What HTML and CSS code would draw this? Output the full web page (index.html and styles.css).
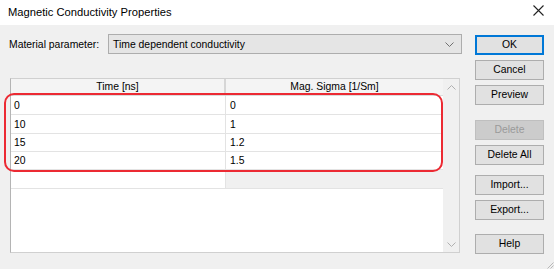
FILE: index.html
```html
<!DOCTYPE html>
<html>
<head>
    <meta charset="UTF-8">
    <title>Magnetic Conductivity Properties</title>
    <link rel="stylesheet" href="styles.css">
</head>
<body>
<div class="dialog">
    <div class="titlebar">
        <span class="title">Magnetic Conductivity Properties</span>
        <svg class="close" width="11" height="11" viewBox="0 0 11 11"><path d="M0.5 0.5L10.5 10.5M10.5 0.5L0.5 10.5" stroke="#222" stroke-width="1.1" fill="none"/></svg>
    </div>
    <div class="body">
        <div class="main">
            <div class="param-row">
                <span class="label">Material parameter:</span>
                <div class="combo">
                    <span>Time dependent conductivity</span>
                    <svg width="9" height="5" viewBox="0 0 9 5"><path d="M0.5 0.5L4.5 4.5L8.5 0.5" stroke="#707070" fill="none"/></svg>
                </div>
            </div>
            <div class="table">
                <div class="grid">
                    <div class="head">Time [ns]</div>
                    <div class="head">Mag. Sigma [1/Sm]</div>
                    <div class="cell">0</div><div class="cell">0</div>
                    <div class="cell">10</div><div class="cell">1</div>
                    <div class="cell">15</div><div class="cell">1.2</div>
                    <div class="cell">20</div><div class="cell">1.5</div>
                    <div class="cell"></div><div class="cell blank"></div>
                </div>
                <div class="scrollbar">
                    <svg width="9" height="5" viewBox="0 0 9 5"><path d="M0.5 4.5L4.5 0.5L8.5 4.5" stroke="#b0b0b0" fill="none"/></svg>
                    <svg width="9" height="5" viewBox="0 0 9 5"><path d="M0.5 0.5L4.5 4.5L8.5 0.5" stroke="#b0b0b0" fill="none"/></svg>
                </div>
            </div>
        </div>
        <div class="buttons">
            <div class="btn default">OK</div>
            <div class="btn">Cancel</div>
            <div class="btn">Preview</div>
            <div class="btn disabled gap">Delete</div>
            <div class="btn">Delete All</div>
            <div class="btn gap-sm">Import...</div>
            <div class="btn">Export...</div>
            <div class="btn gap-help">Help</div>
        </div>
    </div>
    <div class="outline"></div>
    <svg class="grip" width="8" height="8" viewBox="0 0 8 8"><path d="M7.5 1.5L1.5 7.5M7.5 4.5L4.5 7.5" stroke="#b8b8b8" fill="none"/></svg>
</div>
</body>
</html>
```

FILE: styles.css
```css
html,body{
    margin: 0;
    width: 100%;
    height: 100%;
}
body{
    background: #f0f0f0;
    font: 10.4px "Liberation Sans", Arial, sans-serif;
    color: #000;
}
.dialog{
    position: relative;
    width: 554px;
    height: 269px;
    overflow: hidden;
}
.titlebar{
    height: 25px;
    background: #fff;
    display: flex;
    align-items: center;
    justify-content: space-between;
    padding: 0 10px 0 8px;
    box-sizing: border-box;
}
.title{
    font-size: 11.2px;
    color: #000;
    margin-top: -2px;
}
.close{
    margin-top: -4px;
}
.body{
    display: flex;
}
.main{
    width: 475px;
    box-sizing: border-box;
    padding: 9px 0 0 9px;
}
.param-row{
    display: flex;
    align-items: center;
    height: 20px;
}
.label{
    width: 99px;
}
.combo{
    width: 354px;
    height: 20px;
    box-sizing: border-box;
    border: 1px solid #adadad;
    background: #e5e5e5;
    display: flex;
    align-items: center;
    justify-content: space-between;
    padding: 0 7px 0 4px;
}
.table{
    margin: 24px 0 0 1px;
    width: 450px;
    height: 175px;
    box-sizing: border-box;
    border: 1px solid #d0d0d0;
    border-left-color: #b4b4b4;
    background: #fff;
    display: flex;
}
.grid{
    width: 432px;
    display: grid;
    grid-template-columns: 215px 217px;
    grid-template-rows: 17px 19px 19px 18px 18px 19px;
    align-content: start;
}
.head{
    background: #f4f4f4;
    text-align: center;
    line-height: 16px;
    border-bottom: 1px solid #dcdcdc;
    box-sizing: border-box;
}
.head:first-child{
    border-right: 2px solid #d6d6d6;
}
.cell{
    box-sizing: border-box;
    border-bottom: 1px solid #e3e3e3;
    padding-left: 3px;
    display: flex;
    align-items: center;
}
.cell:nth-child(odd){
    border-right: 1px solid #e3e3e3;
}
.cell:nth-child(even){
    padding-left: 4px;
}
.cell.blank{
    background: #f0f0f0;
}
.scrollbar{
    width: 16px;
    background: #f0f0f0;
    display: flex;
    flex-direction: column;
    justify-content: space-between;
    align-items: center;
    padding: 6px 0 5px;
    box-sizing: border-box;
}
.buttons{
    padding-top: 10px;
    display: flex;
    flex-direction: column;
}
.btn{
    width: 69px;
    height: 20px;
    box-sizing: border-box;
    border: 1px solid #adadad;
    background: #e1e1e1;
    text-align: center;
    line-height: 18px;
    margin-bottom: 5px;
}
.btn.default{
    border-color: #0078d7;
    box-shadow: inset 0 0 0 1px #0078d7;
}
.btn.disabled{
    background: #cccccc;
    border-color: #bfbfbf;
    color: #9a9a9a;
}
.btn.gap{
    margin-top: 10px;
}
.btn.gap-sm{
    margin-top: 5px;
}
.btn.gap-help{
    margin-top: 9px;
}
.outline{
    position: absolute;
    left: 4px;
    top: 93px;
    width: 439px;
    height: 79px;
    box-sizing: border-box;
    border: 2px solid #ec2a33;
    border-radius: 10px;
}
.grip{
    position: absolute;
    right: 0;
    bottom: 0;
}
```
